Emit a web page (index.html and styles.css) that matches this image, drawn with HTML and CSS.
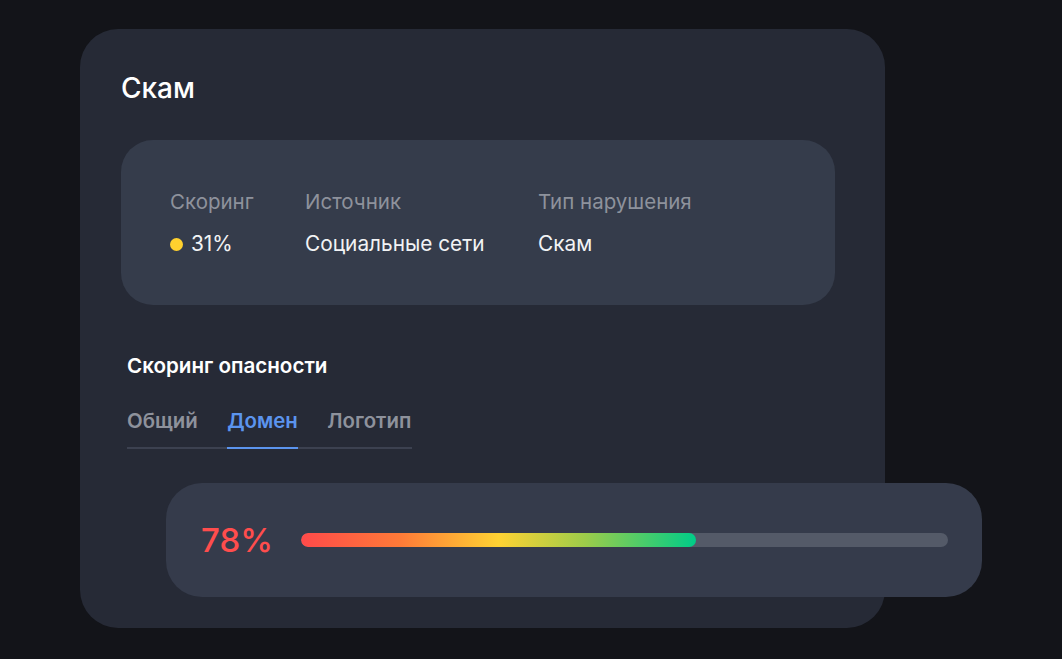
FILE: index.html
```html
<!DOCTYPE html>
<html lang="ru">
<head>
<meta charset="utf-8">
<link rel="stylesheet" href="styles.css">
</head>
<body>
<div class="card">
  <h1 class="title">Скам</h1>
  <div class="info">
    <div class="col col-score">
      <div class="label">Скоринг</div>
      <div class="value"><span class="dot"></span>31%</div>
    </div>
    <div class="col col-source">
      <div class="label">Источник</div>
      <div class="value">Социальные сети</div>
    </div>
    <div class="col">
      <div class="label">Тип нарушения</div>
      <div class="value">Скам</div>
    </div>
  </div>
  <div class="section">
    <h2 class="subtitle">Скоринг опасности</h2>
    <div class="tabs">
      <div class="tab">Общий</div>
      <div class="tab active">Домен</div>
      <div class="tab">Логотип</div>
    </div>
  </div>
  <div class="score">
    <div class="pct">78%</div>
    <div class="track"><div class="fill" style="width:61%"></div></div>
  </div>
</div>
</body>
</html>
```
FILE: styles.css
```css
* { box-sizing: border-box; }
html, body { margin: 0; padding: 0; }
body {
  background: #131419;
  width: 1062px;
  height: 659px;
  overflow: hidden;
  font-family: Inter, "Noto Sans", sans-serif;
  color: #fff;
}
.card {
  margin: 29px 0 0 80px;
  width: 805px;
  height: 599px;
  background: #262a36;
  border-radius: 38px;
  padding: 42px 0 0 41px;
}
.title {
  margin: 0;
  font-size: 28px;
  line-height: 34px;
  font-weight: 500;
  color: #fff;
}
.info {
  margin-top: 35px;
  width: 714px;
  height: 165px;
  background: #353c4b;
  border-radius: 32px;
  padding: 49px 0 0 49px;
  display: flex;
}
.col-score { width: 135px; }
.col-source { width: 233px; }
.label {
  font-size: 20.5px;
  line-height: 26px;
  color: #8e929c;
}
.value {
  margin-top: 16px;
  font-size: 20.8px;
  line-height: 26px;
  color: #f2f3f5;
  display: flex;
  align-items: center;
}
.dot {
  width: 13px;
  height: 13px;
  border-radius: 50%;
  background: #ffd12e;
  margin-right: 8px;
}
.section {
  margin-top: 48px;
  padding-left: 6px;
}
.subtitle {
  margin: 0;
  font-size: 20.6px;
  line-height: 26px;
  font-weight: 600;
  color: #fff;
}
.tabs {
  margin-top: 29px;
  display: inline-flex;
  gap: 29.5px;
  border-bottom: 2px solid #3c4150;
  padding-right: 1px;
}
.tab {
  font-size: 20.4px;
  line-height: 26px;
  font-weight: 600;
  color: #8e929c;
  padding-bottom: 13px;
  margin-bottom: -2px;
  border-bottom: 2px solid transparent;
}
.tab.active {
  color: #5b94ee;
  border-bottom-color: #5b94ee;
}
.score {
  margin-top: 34px;
  margin-left: 45px;
  width: 816px;
  height: 114px;
  background: #353b4b;
  border-radius: 36px;
  display: flex;
  align-items: center;
  padding: 0 34px 0 35px;
}
.pct {
  width: 100px;
  font-size: 33px;
  font-weight: 500;
  color: #ff4d4d;
  line-height: 40px;
}
.track {
  flex: 1;
  height: 14px;
  border-radius: 7px;
  background: #545a68;
  overflow: hidden;
}
.fill {
  height: 100%;
  border-radius: 7px;
  background: linear-gradient(90deg, #ff4a4a 0%, #ff7a38 25%, #ffd233 50%, #9ccc4a 72%, #00cc88 100%);
}
```
